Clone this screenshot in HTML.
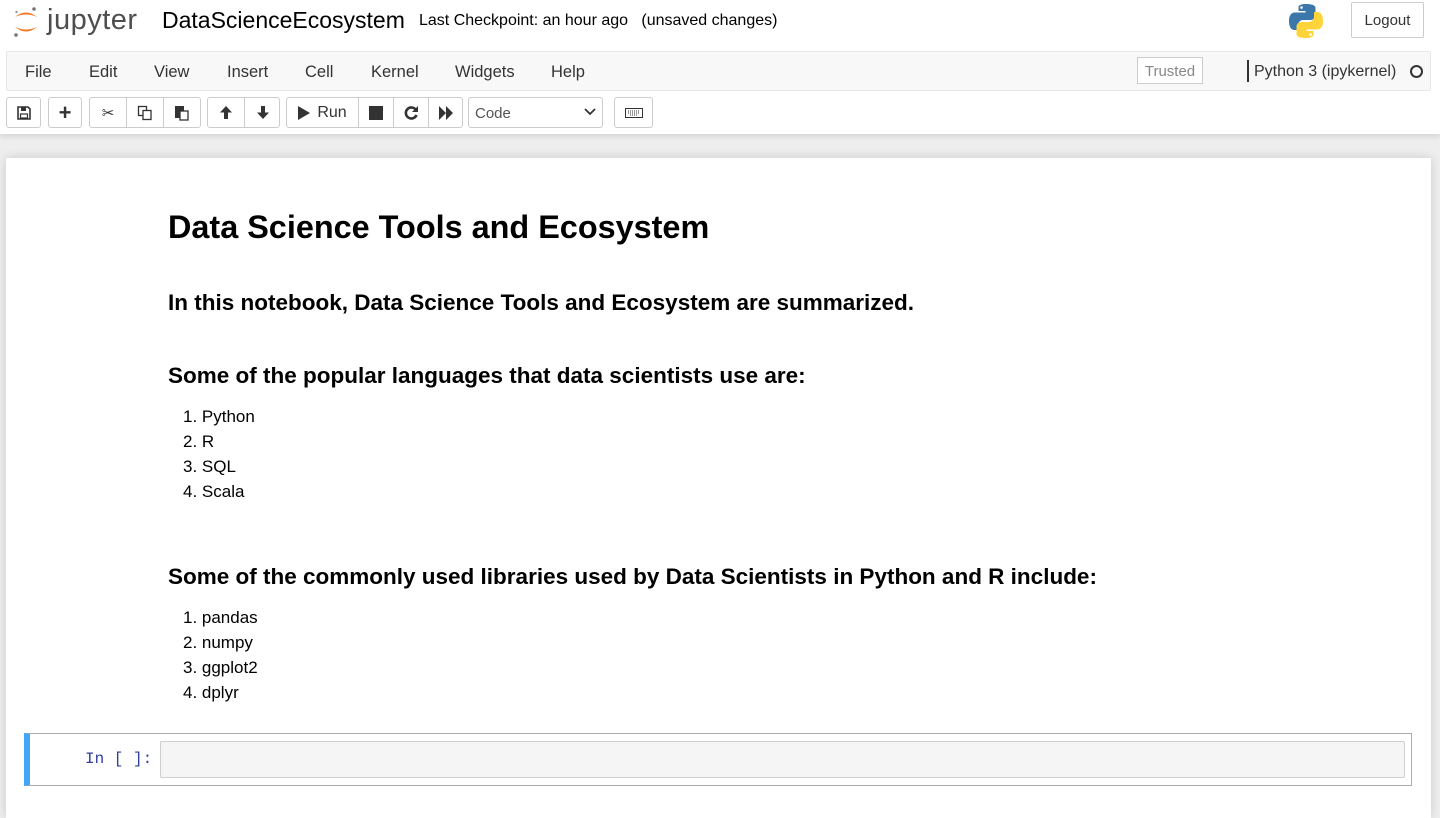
<!DOCTYPE html>
<html><head><meta charset="utf-8"><style>
*{box-sizing:border-box;margin:0;padding:0}
body{width:1440px;height:801px;overflow:hidden;background:#eee;font-family:"Liberation Sans",Arial,sans-serif;position:relative;color:#000}
.a{position:absolute;white-space:nowrap}
#hdr{position:absolute;left:0;top:0;width:1440px;height:134px;background:#fff;box-shadow:0 2px 6px rgba(0,0,0,.12)}
#menu{position:absolute;left:6px;top:51px;width:1425px;height:40px;background:#f8f8f8;border:1px solid #e7e7e7;border-radius:2px}
.m{position:absolute;top:11px;font-size:16.5px;color:#333}
.btn{position:absolute;top:97px;height:31px;border:1px solid #ccc;border-radius:3px;background:#fff}
.sep{position:absolute;top:0;width:1px;height:29px;background:#ccc}
.ic{position:absolute;top:0;height:29px;display:flex;align-items:center;justify-content:center;color:#333}
#nb{position:absolute;left:6px;top:158px;width:1425px;height:660px;background:#fff;box-shadow:0 0 10px rgba(0,0,0,.15)}
h1,h3{position:absolute;left:162px;font-weight:bold;white-space:nowrap}
.li{position:absolute;left:177px;font-size:17px;line-height:25px}
</style></head><body>
<div id="hdr">
 <svg class="a" style="left:12px;top:4px" width="28" height="34" viewBox="0 0 28 34">
  <path d="M3 13 Q14 4 25 13 Q14 8 3 13Z" fill="#f37726"/>
  <path d="M3 23 Q14 32 25 23 Q14 28 3 23Z" fill="#f37726"/>
  <circle cx="22" cy="5" r="1.8" fill="#767677"/><circle cx="4" cy="31" r="1.8" fill="#767677"/><circle cx="4.5" cy="8" r="1.2" fill="#989798"/>
 </svg>
 <div class="a" style="left:47px;top:4px;font-size:29px;color:#4e4e4e;letter-spacing:0.5px">jupyter</div>
 <div class="a" style="left:162px;top:7px;font-size:23px">DataScienceEcosystem</div>
 <div class="a" style="left:419px;top:12px;font-size:16px">Last Checkpoint: an hour ago&nbsp;&nbsp;&nbsp;(unsaved changes)</div>
 <svg class="a" style="left:1288px;top:3px" width="36" height="36" viewBox="0 0 36 36">
  <path d="M17.5 1c-7 0-7 3-7 3v4h7v1.5H7.5S1 8.5 1 18s5.5 9 5.5 9H10v-4.5s0-5.5 5.5-5.5h7s5 0 5-5V5s1-4-10-4z" fill="#3b77a8"/>
  <circle cx="13.5" cy="4.5" r="1.3" fill="#fff"/>
  <path d="M18.5 35c7 0 7-3 7-3v-4h-7v-1.5h10s6.5 1 6.5-8.5-5.5-9-5.5-9H26v4.5s0 5.5-5.5 5.5h-7s-5 0-5 5V31s-1 4 10 4z" fill="#ffd43b"/>
  <circle cx="22.5" cy="31.5" r="1.3" fill="#fff"/>
 </svg>
 <div class="a" style="left:1351px;top:2px;width:73px;height:36px;border:1px solid #ccc;border-radius:2px;font-size:15px;color:#333;text-align:center;line-height:36px">Logout</div>
 <div id="menu">
  <span class="m" style="left:18px">File</span><span class="m" style="left:82px">Edit</span><span class="m" style="left:147px">View</span><span class="m" style="left:220px">Insert</span><span class="m" style="left:298px">Cell</span><span class="m" style="left:364px">Kernel</span><span class="m" style="left:448px">Widgets</span><span class="m" style="left:544px">Help</span>
  <div class="a" style="left:1130px;top:5px;width:66px;height:27px;border:1px solid #ccc;background:#fff;font-size:15px;color:#888;text-align:center;line-height:27px">Trusted</div>
  <div class="a" style="left:1240px;top:8px;width:2px;height:22px;background:#333"></div>
  <span class="m" style="left:1247px;font-size:16px;top:11px;color:#333">Python 3 (ipykernel)</span>
  <div class="a" style="left:1403px;top:13px;width:13px;height:13px;border:2px solid #333;border-radius:50%"></div>
 </div>
 <div class="btn" style="left:6px;width:35px"><div class="ic" style="left:0;width:33px;font-size:14px">
  <svg width="14" height="14" viewBox="0 0 14 14"><path d="M1 1h10l2 2v10H1z" fill="none" stroke="#333" stroke-width="1.6"/><rect x="4" y="1" width="5" height="4" fill="#333"/><rect x="3.5" y="8" width="7" height="4" fill="none" stroke="#333" stroke-width="1.2"/></svg></div></div>
 <div class="btn" style="left:48px;width:34px"><div class="ic" style="left:0;width:32px;font-size:22px;font-weight:bold">+</div></div>
 <div class="btn" style="left:89px;width:112px"><div class="ic" style="left:0;width:36px;font-size:15px">✂</div><div class="sep" style="left:36px"></div>
  <div class="ic" style="left:37px;width:36px"><svg width="16" height="16" viewBox="0 0 16 16"><rect x="1.5" y="1.5" width="8" height="9" fill="#fff" stroke="#333" stroke-width="1.3"/><rect x="6" y="5.5" width="8" height="9" fill="#fff" stroke="#333" stroke-width="1.3"/></svg></div><div class="sep" style="left:73px"></div>
  <div class="ic" style="left:74px;width:36px"><svg width="16" height="16" viewBox="0 0 16 16"><rect x="1" y="1" width="9" height="12" fill="#333"/><rect x="6" y="6" width="8" height="9" fill="#fff" stroke="#333" stroke-width="1.3"/></svg></div></div>
 <div class="btn" style="left:207px;width:73px">
  <div class="ic" style="left:0;width:36px"><svg width="14" height="15" viewBox="0 0 14 15"><path d="M7 1L1 7.5h4V14h4V7.5h4z" fill="#333"/></svg></div><div class="sep" style="left:36px"></div>
  <div class="ic" style="left:37px;width:35px"><svg width="14" height="15" viewBox="0 0 14 15"><path d="M7 14L1 7.5h4V1h4v6.5h4z" fill="#333"/></svg></div></div>
 <div class="btn" style="left:286px;width:177px">
  <div class="ic" style="left:0;width:71px;font-size:16px"><svg width="12" height="14" viewBox="0 0 12 14" style="margin-right:7px"><path d="M0 0L12 7L0 14Z" fill="#333"/></svg>Run</div><div class="sep" style="left:71px"></div>
  <div class="ic" style="left:72px;width:34px"><div style="width:14px;height:14px;background:#333"></div></div><div class="sep" style="left:106px"></div>
  <div class="ic" style="left:107px;width:34px"><svg width="15" height="15" viewBox="0 0 15 15"><path d="M12 5A5.5 5.5 0 1 0 12.5 10" fill="none" stroke="#333" stroke-width="2.6"/><path d="M14 1v6H8z" fill="#333"/></svg></div><div class="sep" style="left:141px"></div>
  <div class="ic" style="left:142px;width:34px"><svg width="14" height="14" viewBox="0 0 14 14"><path d="M0 0L7 7L0 14ZM7 0L14 7L7 14Z" fill="#333"/></svg></div></div>
 <div class="btn" style="left:468px;width:135px;padding:6px"><span style="font-size:15px;color:#555;position:absolute;left:6px;top:7px">Code</span>
  <svg style="position:absolute;right:6px;top:10px" width="12" height="8" viewBox="0 0 12 8"><path d="M1 1l5 5 5-5" fill="none" stroke="#333" stroke-width="1.8"/></svg></div>
 <div class="btn" style="left:614px;width:39px"><div class="ic" style="left:0;width:37px"><svg width="18" height="10" viewBox="0 0 18 10"><rect x="0.5" y="0.5" width="17" height="9" fill="#fff" stroke="#333"/><path d="M3 3h12M3 5h12M5 7h8" stroke="#333" stroke-dasharray="1 1"/></svg></div></div>
</div>
<div id="nb">
 <h1 style="top:51px;font-size:32.4px">Data Science Tools and Ecosystem</h1>
 <h3 style="top:132px;font-size:22.5px">In this notebook, Data Science Tools and Ecosystem are summarized.</h3>
 <h3 style="top:205px;font-size:22.5px">Some of the popular languages that data scientists use are:</h3>
 <div class="li" style="top:246px">1. Python<br>2. R<br>3. SQL<br>4. Scala</div>
 <h3 style="top:406px;font-size:22.5px">Some of the commonly used libraries used by Data Scientists in Python and R include:</h3>
 <div class="li" style="top:447px">1. pandas<br>2. numpy<br>3. ggplot2<br>4. dplyr</div>
 <div class="a" style="left:18px;top:575px;width:1388px;height:53px;border:1px solid #ababab;border-left:6px solid #42a5f5">
  <div class="a" style="left:55px;top:16px;font-family:'Liberation Mono',monospace;font-size:16px;color:#303f9f">In [ ]:</div>
  <div class="a" style="left:130px;top:7px;width:1245px;height:37px;background:#f5f5f5;border:1px solid #cfcfcf;border-radius:2px"></div>
 </div>
</div>
</body></html>
